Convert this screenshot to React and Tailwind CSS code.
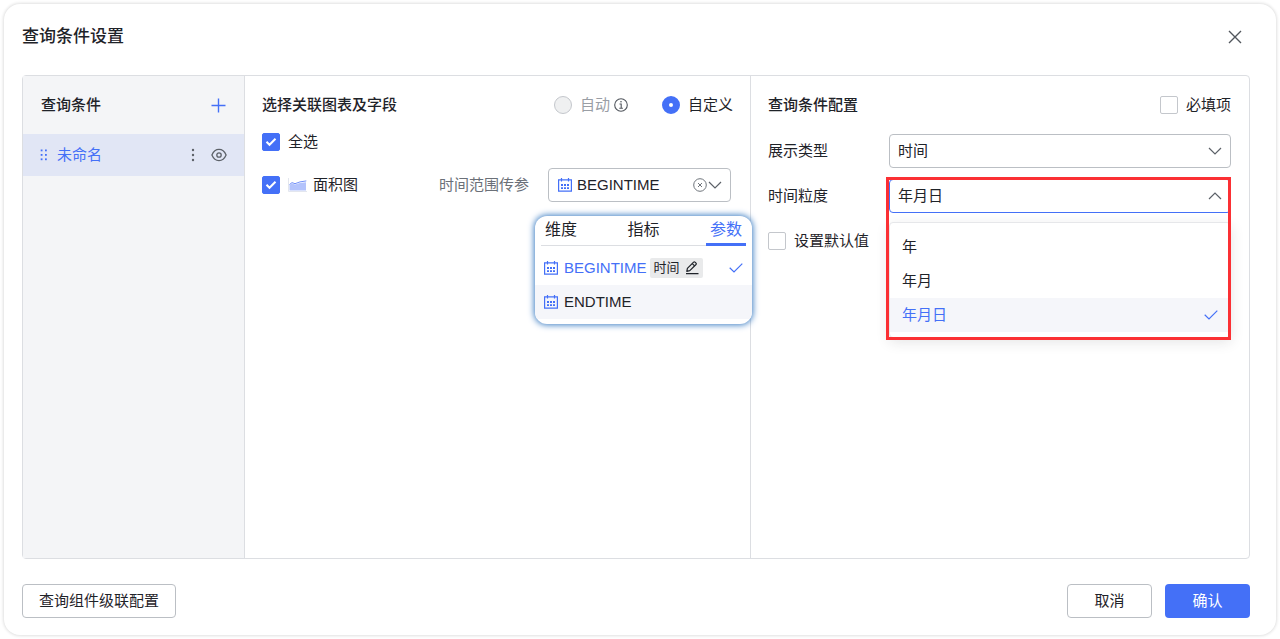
import React, { useState } from 'react';

const TABS = ['维度', '指标', '参数'];
const PARAMS = ['BEGINTIME', 'ENDTIME'];
const GRANULARITIES = ['年', '年月', '年月日'];

function CloseIcon() {
  return (
    <svg width="14" height="14" viewBox="0 0 14 14" fill="none" stroke="#51565d" strokeWidth="1.4">
      <path d="M1 1l12 12M13 1L1 13" />
    </svg>
  );
}

function PlusIcon() {
  return (
    <svg width="15" height="15" viewBox="0 0 15 15" fill="none" stroke="#4470f7" strokeWidth="1.4">
      <path d="M7.5 0.5v14M0.5 7.5h14" />
    </svg>
  );
}

function GripIcon() {
  return (
    <svg width="8" height="12" viewBox="0 0 8 12" fill="#4470f7">
      <rect x="0.7" y="0.5" width="1.8" height="1.8" />
      <rect x="5" y="0.5" width="1.8" height="1.8" />
      <rect x="0.7" y="5" width="1.8" height="1.8" />
      <rect x="5" y="5" width="1.8" height="1.8" />
      <rect x="0.7" y="9.4" width="1.8" height="1.8" />
      <rect x="5" y="9.4" width="1.8" height="1.8" />
    </svg>
  );
}

function MoreIcon() {
  return (
    <svg width="4" height="14" viewBox="0 0 4 14" fill="#5c6168">
      <circle cx="2" cy="2" r="1.2" />
      <circle cx="2" cy="7" r="1.2" />
      <circle cx="2" cy="12" r="1.2" />
    </svg>
  );
}

function EyeIcon() {
  return (
    <svg width="16" height="14" viewBox="0 0 16 14" fill="none" stroke="#5c6168" strokeWidth="1.3">
      <path d="M0.9 7C2.4 3.5 5 1.4 8 1.4S13.6 3.5 15.1 7C13.6 10.5 11 12.6 8 12.6S2.4 10.5 0.9 7z" strokeLinejoin="round" />
      <circle cx="8" cy="7" r="2.2" />
    </svg>
  );
}

function CalendarIcon() {
  return (
    <svg width="14" height="14" viewBox="0 0 14 14" fill="none" stroke="#4470f7" strokeWidth="1.2">
      <path d="M0.6 1.9h12.8v11.3H0.6zM3.5 0v3.5M10.5 0v3.5" />
      <path d="M3 7h2M6 7h2M9 7h2M3 10.2h2M6 10.2h2M9 10.2h2" strokeWidth="1.8" />
    </svg>
  );
}

function AreaIcon() {
  return (
    <svg width="19" height="14" viewBox="0 0 19 14" fill="none">
      <path d="M0.5 0v13.500H19" stroke="#e3e6ee" />
      <path d="M1.500 7L4 5.400l3 1L12 5l6-0.800V12.500H1.500z" fill="#b3c3fc" />
      <path d="M1.500 6.500L4 4.600l3 1.100L12 3.900l6.300-1" stroke="#7391f8" />
    </svg>
  );
}

function InfoIcon() {
  return (
    <svg width="14" height="14" viewBox="0 0 14 14" fill="none" stroke="#51565d" strokeWidth="1.1">
      <circle cx="7" cy="7" r="6.3" />
      <path d="M5.5 6h1.7v4.2M5.3 10.2h3.6" />
      <circle cx="7" cy="3.8" r="0.8" fill="#51565d" stroke="none" />
    </svg>
  );
}

function ClearIcon() {
  return (
    <svg width="14" height="14" viewBox="0 0 14 14" fill="none" stroke="#70757c" strokeWidth="1">
      <circle cx="7" cy="7" r="6.3" />
      <path d="M5 5l4 4M9 5L5 9" />
    </svg>
  );
}

function Chevron({ up }) {
  return (
    <svg width="14" height="8" viewBox="0 0 14 8" fill="none" stroke="#5c6168" strokeWidth="1.2">
      <path d={up ? 'M1 7l6-6 6 6' : 'M1 1l6 6 6-6'} />
    </svg>
  );
}

function PencilIcon() {
  return (
    <svg width="14" height="14" viewBox="0 0 14 14" fill="none" stroke="#1f2329" strokeWidth="1.2">
      <path d="M1.8 10.3l0.6-3L8.6 1.1q0.7-0.6 1.4 0l1 1q0.6 0.7 0 1.4L4.8 9.7z" strokeLinejoin="round" />
      <path d="M7.3 2.6l2.3 2.3" />
      <path d="M1 12.7h12.5" strokeWidth="1.3" />
    </svg>
  );
}

function TickIcon() {
  return (
    <svg width="14" height="10" viewBox="0 0 14 10" fill="none" stroke="#4470f7" strokeWidth="1.2">
      <path d="M0.7 4.8L5 9l8.3-8.3" />
    </svg>
  );
}

function Checkbox({ id, checked, onChange }) {
  return (
    <span className="relative grid size-[18px] shrink-0 place-items-center">
      <input
        id={id}
        type="checkbox"
        checked={checked}
        onChange={(e) => onChange(e.target.checked)}
        className="size-[18px] appearance-none rounded-xs border border-[#c4c7cc] bg-white checked:border-[#4470f7] checked:bg-[#4470f7]"
      />
      {checked && (
        <svg className="pointer-events-none absolute" width="12" height="10" viewBox="0 0 12 10" fill="none" stroke="white" strokeWidth="2">
          <path d="M1.5 4.8l3 3 6-6" />
        </svg>
      )}
    </span>
  );
}

function Sidebar() {
  return (
    <aside className="w-[222px] shrink-0 border-r border-[#dcdee2] bg-[#f4f5f7]">
      <div className="flex h-[58px] items-center justify-between px-[18px]">
        <h2 className="font-medium">查询条件</h2>
        <button type="button" aria-label="添加">
          <PlusIcon />
        </button>
      </div>
      <div className="flex h-[42px] items-center bg-[#e1e6f5] px-[17px] text-[#4470f7]">
        <GripIcon />
        <span className="ml-[9px] flex-1">未命名</span>
        <div className="flex items-center gap-4">
          <button type="button" aria-label="更多">
            <MoreIcon />
          </button>
          <button type="button" aria-label="显示">
            <EyeIcon />
          </button>
        </div>
      </div>
    </aside>
  );
}

function FieldPopup({ value, onSelect }) {
  const [tab, setTab] = useState('参数');

  return (
    <div className="absolute top-[48px] -left-[13px] z-10 w-[217px] overflow-hidden rounded-xl bg-white pb-[5px] shadow-[0_0_6px_1px_#3f7fc4]">
      <div className="mx-[6px] mb-[5px] flex h-[30px] justify-between border-b border-[#dcdee2] text-base" role="tablist">
        {TABS.map((name) => (
          <button
            key={name}
            type="button"
            role="tab"
            aria-selected={tab === name}
            onClick={() => setTab(name)}
            className={
              tab === name
                ? '-mb-px border-b-3 border-[#4470f7] px-1 leading-6 text-[#4470f7]'
                : 'px-1 pb-0.5 leading-6'
            }
          >
            {name}
          </button>
        ))}
      </div>
      <ul role="listbox" aria-label="参数">
        {PARAMS.map((name) => (
          <li
            key={name}
            role="option"
            aria-selected={value === name}
            onClick={() => onSelect(name)}
            className={
              value === name
                ? 'flex h-[34px] items-center px-[9px] text-[#4470f7]'
                : 'flex h-[34px] items-center bg-[#f5f6fa] px-[9px]'
            }
          >
            <CalendarIcon />
            <span className="ml-[6px]">{name}</span>
            {value === name && (
              <>
                <button type="button" className="ml-[3px] flex h-5 items-center gap-[5px] rounded-xs bg-[#e9eaeb] px-1 text-[13px] text-[#1f2329]">
                  时间
                  <PencilIcon />
                </button>
                <span className="ml-auto">
                  <TickIcon />
                </span>
              </>
            )}
          </li>
        ))}
      </ul>
    </div>
  );
}

function FieldsPanel() {
  const [mode, setMode] = useState('custom');
  const [checked, setChecked] = useState(true);
  const [param, setParam] = useState('BEGINTIME');

  return (
    <section className="flex w-[506px] shrink-0 flex-col gap-[15px] border-r border-[#dcdee2] px-[17px] pt-[18px]">
      <div className="flex h-[22px] items-center">
        <h2 className="flex-1 font-medium">选择关联图表及字段</h2>
        <div className="flex items-center gap-[34px]">
          <div className="flex items-center gap-1">
            <label className="flex items-center gap-2 text-[#9a9ea5]">
              <input
                type="radio"
                name="mode"
                disabled
                checked={mode === 'auto'}
                onChange={() => setMode('auto')}
                className="size-[18px] appearance-none rounded-full border border-[#c4c7cc] bg-[#eff0f1]"
              />
              自动
            </label>
            <InfoIcon />
          </div>
          <label className="flex items-center gap-2">
            <input
              type="radio"
              name="mode"
              checked={mode === 'custom'}
              onChange={() => setMode('custom')}
              className="size-[18px] appearance-none rounded-full border border-[#c4c7cc] bg-white checked:border-7 checked:border-[#4470f7]"
            />
            自定义
          </label>
        </div>
      </div>

      <div className="flex h-[22px] items-center gap-2">
        <Checkbox id="all" checked={checked} onChange={setChecked} />
        <label htmlFor="all">全选</label>
      </div>

      <div className="flex h-[34px] items-center gap-2 pr-[2px]">
        <Checkbox id="area" checked={checked} onChange={setChecked} />
        <label htmlFor="area" className="flex flex-1 items-center gap-[6px]">
          <AreaIcon />
          面积图
        </label>
        <label htmlFor="param" className="mr-[11px] text-[#6b7078]">
          时间范围传参
        </label>
        <div className="relative w-[183px]">
          <select
            id="param"
            value={param}
            onChange={(e) => setParam(e.target.value)}
            className="h-[34px] w-full appearance-none rounded border border-[#bbbfc4] bg-white pl-7"
          >
            {PARAMS.map((name) => (
              <option key={name}>{name}</option>
            ))}
          </select>
          <span className="pointer-events-none absolute inset-y-0 left-[10px] flex items-center">
            <CalendarIcon />
          </span>
          <span className="absolute inset-y-0 right-[9px] flex items-center gap-px">
            <button type="button" aria-label="清空">
              <ClearIcon />
            </button>
            <Chevron />
          </span>
          <FieldPopup value={param} onSelect={setParam} />
        </div>
      </div>
    </section>
  );
}

function ConfigPanel() {
  const [required, setRequired] = useState(false);
  const [useDefault, setUseDefault] = useState(false);
  const [granularity, setGranularity] = useState('年月日');

  return (
    <section className="min-w-0 flex-1 pt-[18px] pr-[18px] pl-[17px]">
      <div className="flex h-[22px] items-center">
        <h2 className="flex-1 font-medium">查询条件配置</h2>
        <div className="flex items-center gap-2">
          <Checkbox id="required" checked={required} onChange={setRequired} />
          <label htmlFor="required">必填项</label>
        </div>
      </div>

      <div className="mt-[18px] flex items-center">
        <label htmlFor="type" className="w-[121px] shrink-0">
          展示类型
        </label>
        <div className="relative flex-1">
          <select id="type" className="h-[34px] w-full appearance-none rounded border border-[#bbbfc4] bg-white px-2">
            <option>时间</option>
          </select>
          <span className="pointer-events-none absolute inset-y-0 right-[9px] flex items-center">
            <Chevron />
          </span>
        </div>
      </div>

      <div className="mt-[11px] flex items-center">
        <label htmlFor="granularity" className="w-[121px] shrink-0">
          时间粒度
        </label>
        <div className="relative flex-1">
          <select
            id="granularity"
            value={granularity}
            onChange={(e) => setGranularity(e.target.value)}
            className="h-[34px] w-full appearance-none rounded border border-[#4470f7] bg-white px-2"
          >
            {GRANULARITIES.map((name) => (
              <option key={name}>{name}</option>
            ))}
          </select>
          <span className="pointer-events-none absolute inset-y-0 right-[9px] flex items-center">
            <Chevron up />
          </span>
          <ul
            role="listbox"
            aria-label="时间粒度"
            className="absolute inset-x-0 top-[43px] z-10 rounded border border-[#e6e7ea] bg-white pt-[7px] pb-[5px] shadow-[0_4px_14px_rgba(31,35,41,0.12)]"
          >
            {GRANULARITIES.map((name) => (
              <li
                key={name}
                role="option"
                aria-selected={granularity === name}
                onClick={() => setGranularity(name)}
                className={
                  granularity === name
                    ? 'flex h-[34px] items-center justify-between bg-[#f5f6fa] px-3 text-[#4470f7]'
                    : 'flex h-[34px] items-center px-3'
                }
              >
                {name}
                {granularity === name && <TickIcon />}
              </li>
            ))}
          </ul>
          {/* highlight frame around the open dropdown */}
          <div className="pointer-events-none absolute -top-[2px] right-0 -left-[3px] z-20 h-[163px] border-3 border-[#fb3034]" />
        </div>
      </div>

      <div className="mt-[17px] flex h-[22px] items-center gap-2">
        <Checkbox id="default" checked={useDefault} onChange={setUseDefault} />
        <label htmlFor="default">设置默认值</label>
      </div>
    </section>
  );
}

function App() {
  return (
    <div className="flex min-h-screen bg-white p-1 font-['Liberation_Sans','Noto_Sans_CJK_SC',sans-serif] text-[15px] leading-[22px] text-[#1f2329]">
      <div className="flex flex-1 flex-col rounded-2xl bg-white pr-[26px] pb-[17px] pl-[18px] shadow-[0_0_3px_1px_rgba(0,0,0,0.12)]">
        <header className="mb-[6px] flex h-[65px] items-center justify-between pr-2">
          <h1 className="text-[17px] leading-6 font-medium">查询条件设置</h1>
          <button type="button" aria-label="关闭">
            <CloseIcon />
          </button>
        </header>

        <main className="flex flex-1 rounded border border-[#dcdee2]">
          <Sidebar />
          <FieldsPanel />
          <ConfigPanel />
        </main>

        <footer className="mt-[25px] flex items-center gap-[13px]">
          <button type="button" className="mr-auto h-[34px] rounded border border-[#bbbfc4] px-4">
            查询组件级联配置
          </button>
          <button type="button" className="h-[34px] w-[85px] rounded border border-[#bbbfc4]">
            取消
          </button>
          <button type="button" className="h-[34px] w-[85px] rounded bg-[#4470f7] text-white">
            确认
          </button>
        </footer>
      </div>
    </div>
  );
}

export default App;
